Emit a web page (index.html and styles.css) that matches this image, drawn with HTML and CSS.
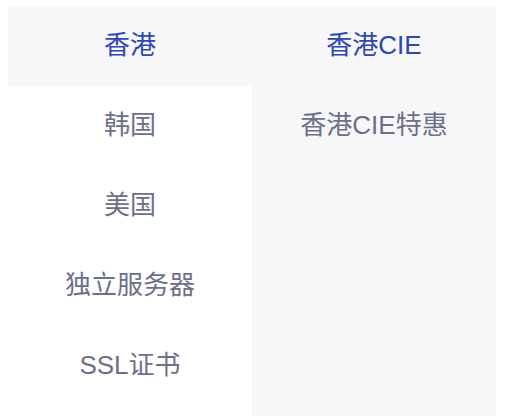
FILE: index.html
```html
<!DOCTYPE html>
<html lang="zh">
<head>
<meta charset="utf-8">
<link rel="stylesheet" href="styles.css">
</head>
<body>
<div class="menu">
  <ul class="col col-left">
    <li class="item active">香港</li>
    <li class="item">韩国</li>
    <li class="item">美国</li>
    <li class="item">独立服务器</li>
    <li class="item">SSL证书</li>
  </ul>
  <ul class="col col-right">
    <li class="item active">香港CIE</li>
    <li class="item">香港CIE特惠</li>
  </ul>
</div>
</body>
</html>
```
FILE: styles.css
```css
html, body {
  background: #ffffff;
}
body {
  margin: 6px 10px 0 8px;
  font-family: "Liberation Sans", "Noto Sans CJK SC", sans-serif;
  overflow: hidden;
}
.menu {
  display: flex;
  height: 410px;
}
.col {
  list-style: none;
  margin: 0;
  padding: 0;
  width: 244px;
}
.col-right {
  background: #f7f7fa;
}
.item {
  height: 80px;
  display: flex;
  align-items: center;
  justify-content: center;
  font-size: 26px;
  line-height: 30px;
  padding-bottom: 2px;
  box-sizing: border-box;
  color: #6b7088;
}
.item.active {
  color: #2d46b0;
}
.col-left .item.active {
  background: #f7f7fa;
}
```
